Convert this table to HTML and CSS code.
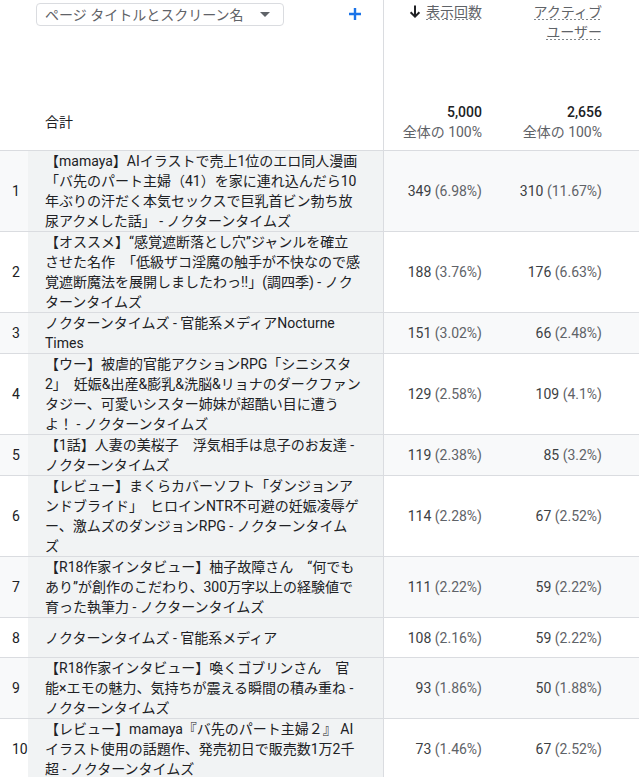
FILE: index.html
```html
<!DOCTYPE html>
<html lang="ja">
<head>
<meta charset="utf-8">
<link rel="stylesheet" href="styles.css">
</head>
<body>
<table class="report">
  <colgroup>
    <col class="c-idx"><col class="c-dim"><col class="c-m1"><col class="c-m2"><col class="c-fill">
  </colgroup>
  <thead>
    <tr class="head-names">
      <th colspan="2" class="dim-head">
        <div class="dim-tools">
          <div class="picker"><span>ページ タイトルとスクリーン名</span><span class="caret"></span></div>
          <svg class="plus" width="14" height="14" viewBox="0 0 14 14"><path d="M7 1v12M1 7h12" stroke="#1a73e8" stroke-width="2.4" fill="none"/></svg>
        </div>
      </th>
      <th class="metric-head"><svg class="sort" width="12" height="13" viewBox="0 0 12 13"><path d="M6 0.5v11M1.6 7.2L6 11.6l4.4-4.4" stroke="#202124" stroke-width="2" fill="none"/></svg> <span class="dash">表示回数</span></th>
      <th class="metric-head"><span class="dash">アクティブ</span><br><span class="dash">ユーザー</span></th>
      <th class="fill"></th>
    </tr>
    <tr class="head-totals">
      <th colspan="2" class="total-label">合計</th>
      <th class="total"><div class="total-num">5,000</div><div class="total-pct">全体の 100%</div></th>
      <th class="total"><div class="total-num">2,656</div><div class="total-pct">全体の 100%</div></th>
      <th class="fill"></th>
    </tr>
  </thead>
  <tbody>
    <tr class="odd"><td class="idx">1</td><td class="dim">【mamaya】AIイラストで売上1位のエロ同人漫画<br>「バ先のパート主婦（41）を家に連れ込んだら10<br>年ぶりの汗だく本気セックスで巨乳首ビン勃ち放<br>尿アクメした話」 - ノクターンタイムズ</td><td class="val">349 <span class="pct">(6.98%)</span></td><td class="val">310 <span class="pct">(11.67%)</span></td><td class="fill"></td></tr>
    <tr><td class="idx">2</td><td class="dim">【オススメ】“感覚遮断落とし穴”ジャンルを確立<br>させた名作　「低級ザコ淫魔の触手が不快なので感<br>覚遮断魔法を展開しましたわっ!!」(調四季) - ノク<br>ターンタイムズ</td><td class="val">188 <span class="pct">(3.76%)</span></td><td class="val">176 <span class="pct">(6.63%)</span></td><td class="fill"></td></tr>
    <tr class="odd"><td class="idx">3</td><td class="dim">ノクターンタイムズ - 官能系メディアNocturne<br>Times</td><td class="val">151 <span class="pct">(3.02%)</span></td><td class="val">66 <span class="pct">(2.48%)</span></td><td class="fill"></td></tr>
    <tr><td class="idx">4</td><td class="dim">【ウー】被虐的官能アクションRPG「シニシスタ<br>2」　妊娠&amp;出産&amp;膨乳&amp;洗脳&amp;リョナのダークファン<br>タジー、可愛いシスター姉妹が超酷い目に遭う<br>よ！ - ノクターンタイムズ</td><td class="val">129 <span class="pct">(2.58%)</span></td><td class="val">109 <span class="pct">(4.1%)</span></td><td class="fill"></td></tr>
    <tr class="odd"><td class="idx">5</td><td class="dim">【1話】人妻の美桜子　浮気相手は息子のお友達 -<br>ノクターンタイムズ</td><td class="val">119 <span class="pct">(2.38%)</span></td><td class="val">85 <span class="pct">(3.2%)</span></td><td class="fill"></td></tr>
    <tr><td class="idx">6</td><td class="dim">【レビュー】まくらカバーソフト「ダンジョンア<br>ンドブライド」　ヒロインNTR不可避の妊娠凌辱ゲ<br>ー、激ムズのダンジョンRPG - ノクターンタイム<br>ズ</td><td class="val">114 <span class="pct">(2.28%)</span></td><td class="val">67 <span class="pct">(2.52%)</span></td><td class="fill"></td></tr>
    <tr class="odd"><td class="idx">7</td><td class="dim">【R18作家インタビュー】柚子故障さん　“何でも<br>あり”が創作のこだわり、300万字以上の経験値で<br>育った執筆力 - ノクターンタイムズ</td><td class="val">111 <span class="pct">(2.22%)</span></td><td class="val">59 <span class="pct">(2.22%)</span></td><td class="fill"></td></tr>
    <tr><td class="idx">8</td><td class="dim">ノクターンタイムズ - 官能系メディア</td><td class="val">108 <span class="pct">(2.16%)</span></td><td class="val">59 <span class="pct">(2.22%)</span></td><td class="fill"></td></tr>
    <tr class="odd"><td class="idx">9</td><td class="dim">【R18作家インタビュー】喚くゴブリンさん　官<br>能×エモの魅力、気持ちが震える瞬間の積み重ね -<br>ノクターンタイムズ</td><td class="val">93 <span class="pct">(1.86%)</span></td><td class="val">50 <span class="pct">(1.88%)</span></td><td class="fill"></td></tr>
    <tr><td class="idx">10</td><td class="dim">【レビュー】mamaya『バ先のパート主婦２』 AI<br>イラスト使用の話題作、発売初日で販売数1万2千<br>超 - ノクターンタイムズ</td><td class="val">73 <span class="pct">(1.46%)</span></td><td class="val">67 <span class="pct">(2.52%)</span></td><td class="fill"></td></tr>
  </tbody>
</table>
</body>
</html>
```

FILE: styles.css
```css
html, body {
  margin: 0;
  padding: 0;
  background: #ffffff;
}
body {
  font-family: Roboto, "Noto Sans CJK JP", sans-serif;
  font-size: 14px;
  line-height: 20px;
  color: #202124;
}
.report {
  width: 639px;
  table-layout: fixed;
  border-collapse: separate;
  border-spacing: 0;
}
.c-idx { width: 28px; }
.c-dim { width: 356px; }
.c-m1 { width: 106px; }
.c-m2 { width: 120px; }
.c-fill { width: 29px; }

th, td {
  padding: 0;
  font-weight: 400;
  box-sizing: border-box;
}

/* header */
.head-names th {
  height: 102px;
  vertical-align: top;
}
.dim-head {
  border-right: 1px solid #dadce0;
  text-align: left;
}
.dim-tools {
  display: flex;
  align-items: flex-start;
  padding: 3px 21px 0 36px;
}
.picker {
  width: 248px;
  height: 23px;
  box-sizing: border-box;
  border: 1px solid #dadce0;
  border-radius: 4px;
  display: flex;
  align-items: center;
  justify-content: space-between;
  padding: 0 13px 0 8px;
  color: #5f6368;
  line-height: 20px;
}
.caret {
  width: 0;
  height: 0;
  border-left: 5px solid transparent;
  border-right: 5px solid transparent;
  border-top: 5px solid #5f6368;
}
.plus {
  margin-left: auto;
  margin-top: 4px;
}
.metric-head {
  text-align: right;
  padding: 2px 8px 0 0;
  color: #5f6368;
  font-weight: 400;
}
.sort {
  vertical-align: -1px;
  margin-right: 2px;
}
.dash {
  background-image: repeating-linear-gradient(to right, #80868b 0 2px, transparent 2px 4px);
  background-size: 100% 1px;
  background-repeat: no-repeat;
  background-position: left bottom;
}

.head-totals th {
  vertical-align: middle;
  padding-bottom: 8px;
  border-bottom: 1px solid #dadce0;
}
.head-totals .total-label {
  text-align: left;
  padding-left: 45px;
  border-right: 1px solid #dadce0;
}
.head-totals .total {
  text-align: right;
  padding-right: 8px;
}
.total-num {
  font-weight: 500;
  color: #202124;
}
.total-pct {
  color: #5f6368;
}

/* body */
tbody td {
  height: 40px;
  border-bottom: 1px solid #dadce0;
  vertical-align: middle;
}
tbody tr.odd td {
  background: #f8f9fa;
}
tbody td.idx {
  padding-left: 12px;
  white-space: nowrap;
}
tbody td.dim,
tbody tr.odd td.dim {
  background: #f1f3f4;
  border-right: 1px solid #dadce0;
  padding: 0 8px 0 17px;
  white-space: nowrap;
}
tbody td.val {
  text-align: right;
  padding-right: 8px;
  white-space: nowrap;
  color: #3c4043;
}
.pct {
  color: #5f6368;
}
```
